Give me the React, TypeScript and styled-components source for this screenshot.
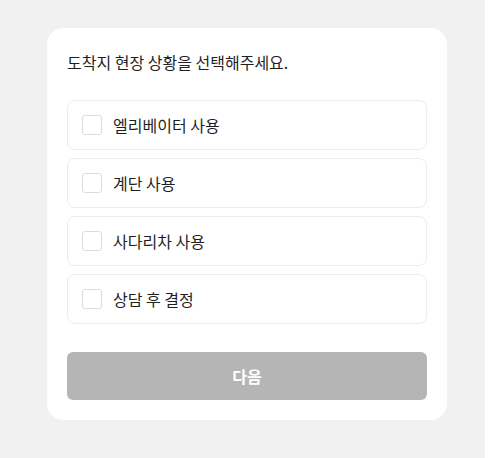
import React from "react";
import styled, { createGlobalStyle } from "styled-components";

const Global = createGlobalStyle`
  html, body { margin: 0; padding: 0; background: #ffffff; }
  body { font-family: "Noto Sans CJK KR", "Noto Sans", sans-serif; }
`;

const Page = styled.div`
  width: 485px;
  height: 458px;
  background: #f1f1f1;
  box-sizing: border-box;
  padding: 28px 0 0 47px;
`;

const Card = styled.div`
  width: 400px;
  box-sizing: border-box;
  background: #ffffff;
  border-radius: 16px;
  padding: 20px;
  display: flex;
  flex-direction: column;
`;

const Title = styled.div`
  font-size: 16px;
  line-height: 28px;
  color: #1f1f1f;
  margin-bottom: 24px;
`;

const List = styled.div`
  display: flex;
  flex-direction: column;
  gap: 8px;
`;

const Option = styled.label`
  height: 50px;
  box-sizing: border-box;
  border: 1px solid #ececec;
  border-radius: 8px;
  display: flex;
  align-items: center;
  padding-left: 14px;
  gap: 11px;
  cursor: pointer;
`;

const Box = styled.span`
  width: 20px;
  height: 20px;
  box-sizing: border-box;
  border: 1px solid #dcdcdc;
  border-radius: 3px;
  background: #fff;
`;

const Label = styled.span`
  font-size: 16px;
  color: #1f1f1f;
`;

const Button = styled.button`
  margin-top: 28px;
  height: 48px;
  border: none;
  border-radius: 6px;
  background: #b5b5b5;
  color: #ffffff;
  font-family: inherit;
  font-size: 16px;
  font-weight: 700;
`;

const options = ["엘리베이터 사용", "계단 사용", "사다리차 사용", "상담 후 결정"];

export default function App() {
  return (
    <>
      <Global />
      <Page>
        <Card>
          <Title>도착지 현장 상황을 선택해주세요.</Title>
          <List>
            {options.map((o) => (
              <Option key={o}>
                <Box />
                <Label>{o}</Label>
              </Option>
            ))}
          </List>
          <Button disabled>다음</Button>
        </Card>
      </Page>
    </>
  );
}
